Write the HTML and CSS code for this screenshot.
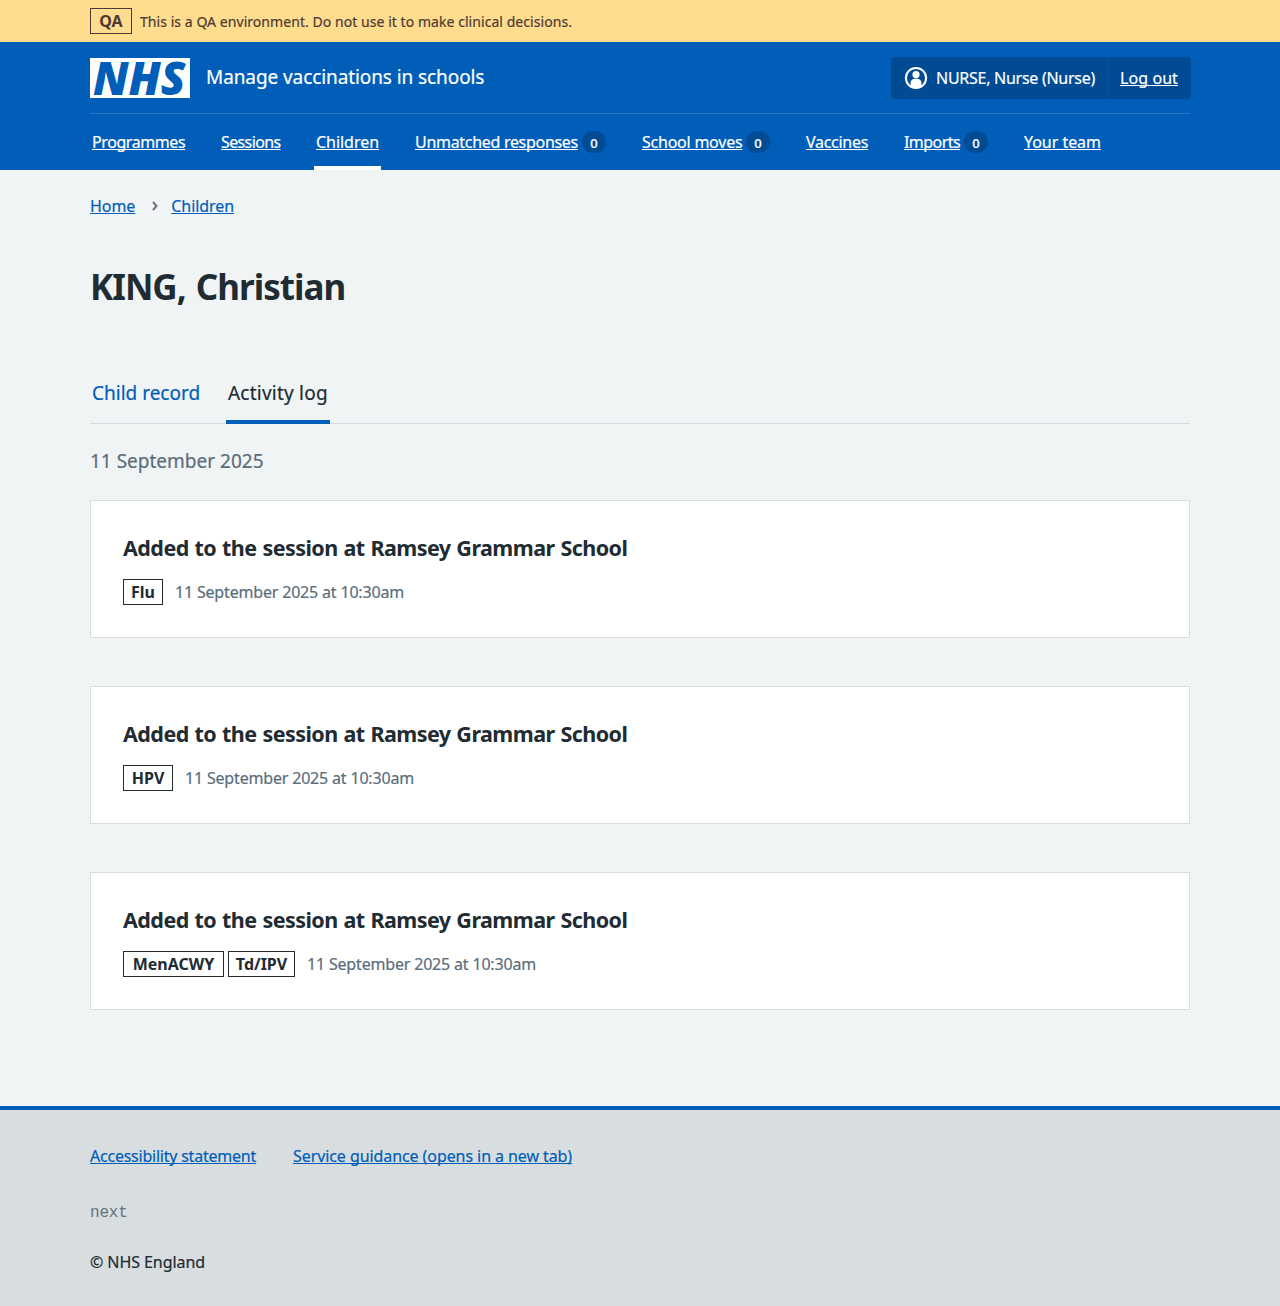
FILE: index.html
```html
<!DOCTYPE html>
<html lang="en">
<head>
<meta charset="utf-8">
<title>KING, Christian – Activity log</title>
<link rel="stylesheet" href="styles.css">
</head>
<body>
<div class="environment">
  <div class="container environment-inner">
    <strong class="tag tag-env">QA</strong>
    <span class="environment-text">This is a QA environment. Do not use it to make clinical decisions.</span>
  </div>
</div>
<header class="header">
  <div class="container">
    <div class="header-top">
      <svg class="logo" viewBox="0 0 100 40" width="100" height="40" role="img" aria-label="NHS">
        <rect width="100" height="40" fill="#fff"/>
        <text class="logo-text" x="3" y="36.5" textLength="92.500" lengthAdjust="spacingAndGlyphs">NHS</text>
      </svg>
      <span class="service-name">Manage vaccinations in schools</span>
      <div class="account">
        <div class="account-user">
          <svg class="account-icon" viewBox="0 0 24 24" width="24" height="24" aria-hidden="true">
            <circle cx="12" cy="12" r="10.1" fill="none" stroke="#fff" stroke-width="2"/>
            <circle cx="12" cy="8.6" r="3.6" fill="#fff"/>
            <path d="M6.500 20.500V17c0-2.500 1.800-4.200 4.200-4.200h2.600c2.400 0 4.200 1.700 4.200 4.200v3.500c-3.300 2.600-7.700 2.600-11 0z" fill="#fff"/>
          </svg>
          <span class="account-name">NURSE, Nurse (Nurse)</span>
        </div>
        <a class="account-link" href="#">Log out</a>
      </div>
    </div>
    <nav class="nav">
      <a class="nav-item programmes" href="#"><span>Programmes</span></a>
      <a class="nav-item sessions" href="#"><span>Sessions</span></a>
      <a class="nav-item children current" href="#"><span>Children</span></a>
      <a class="nav-item unmatched" href="#"><span>Unmatched responses</span><b class="count">0</b></a>
      <a class="nav-item moves" href="#"><span>School moves</span><b class="count">0</b></a>
      <a class="nav-item vaccines" href="#"><span>Vaccines</span></a>
      <a class="nav-item imports" href="#"><span>Imports</span><b class="count">0</b></a>
      <a class="nav-item team" href="#"><span>Your team</span></a>
    </nav>
  </div>
</header>
<div class="container page">
  <nav class="breadcrumb">
    <a href="#">Home</a>
    <svg class="chevron" viewBox="0 0 8 12" width="8" height="12" aria-hidden="true"><path d="M2 2l3.500 4L2 10" fill="none" stroke="#6b727a" stroke-width="2"/></svg>
    <a href="#">Children</a>
  </nav>
  <main>
    <h1 class="title">KING, Christian</h1>
    <nav class="tabs">
      <a class="tab tab-record" href="#"><span>Child record</span></a>
      <a class="tab tab-log selected" href="#"><span>Activity log</span></a>
    </nav>
    <h2 class="day">11 September 2025</h2>
    <section class="card">
      <h3 class="card-title">Added to the session at Ramsey Grammar School</h3>
      <p class="card-meta"><strong class="tag tag-flu">Flu</strong><span class="time">11 September 2025 at 10:30am</span></p>
    </section>
    <section class="card">
      <h3 class="card-title">Added to the session at Ramsey Grammar School</h3>
      <p class="card-meta"><strong class="tag tag-hpv">HPV</strong><span class="time">11 September 2025 at 10:30am</span></p>
    </section>
    <section class="card">
      <h3 class="card-title">Added to the session at Ramsey Grammar School</h3>
      <p class="card-meta"><strong class="tag tag-men">MenACWY</strong><strong class="tag tag-td">Td/IPV</strong><span class="time">11 September 2025 at 10:30am</span></p>
    </section>
  </main>
</div>
<footer class="footer">
  <div class="container">
    <div class="footer-links">
      <a class="footer-accessibility" href="#">Accessibility statement</a>
      <a class="footer-guidance" href="#">Service guidance (opens in a new tab)</a>
    </div>
    <p class="version">next</p>
    <p class="copyright">© NHS England</p>
  </div>
</footer>
</body>
</html>
```
FILE: styles.css
```css
* { box-sizing: border-box; }
body {
  margin: 0;
  background: #f0f4f5;
  color: #212b32;
  font: 400 16px/24px "Noto Sans", "Open Sans", sans-serif;
  -webkit-text-stroke-width: 0.2px;
  white-space: nowrap;
}
h1, h2, h3, p { margin: 0; }
strong, h1, h3, svg, .version { -webkit-text-stroke-width: 0; }
a { color: #005eb8; text-underline-offset: 1px; text-decoration-thickness: 1px; text-decoration-skip-ink: none; }
.container { width: 1100px; margin: 0 auto; }

.tag {
  display: flex;
  align-items: center;
  justify-content: center;
  height: 26px;
  border: 1px solid #212b32;
  font-weight: 700;
  line-height: 24px;
}

.environment { height: 42px; background: #ffdc8e; color: #4d3b33; }
.environment-inner { display: flex; align-items: center; gap: 8px; height: 42px; }
.tag-env { width: 42px; border-color: #4d3b33; }
.environment-text { padding-top: 2px; font-size: 14px; line-height: 24px; letter-spacing: 0.055px; }

.header { height: 128px; background: #005eb8; color: #fff; }
.header-top {
  display: flex;
  align-items: center;
  height: 72px;
  border-bottom: 1px solid #2674c2;
}
.logo { flex: none; display: block; overflow: visible; }
.logo-text { fill: #005eb8; font: italic 800 46.5px "Open Sans", sans-serif; }
.service-name { margin: -2px 0 0 16px; font-size: 19px; line-height: 28px; letter-spacing: -0.09px; }
.account {
  display: flex;
  width: 300px;
  height: 42px;
  margin: 0 -1px 0 auto;
  border-radius: 4px;
  background: #004b93;
}
.account-user {
  display: flex;
  align-items: center;
  width: 217px;
  padding-left: 13px;
  border-right: 1px solid #0057aa;
}
.account-icon { flex: none; margin-right: 8px; }
.account-name { letter-spacing: -0.27px; }
.account-link { padding: 9px 12px; color: #fff; letter-spacing: 0.08px; }

.nav { display: flex; gap: 32px; height: 56px; }
.nav-item {
  display: flex;
  align-items: center;
  gap: 4px;
  padding: 4px 2px 0;
  border-bottom: 4px solid transparent;
  color: #fff;
  text-decoration: none;
}
.nav-item span { text-decoration: underline; text-decoration-thickness: 1px; text-underline-offset: 1px; text-decoration-skip-ink: none; }
.current { border-bottom-color: #fff; }
.programmes span { width: 93px; letter-spacing: -0.42px; }
.sessions span { width: 59px; letter-spacing: -0.62px; }
.children span { width: 63px; letter-spacing: -0.04px; }
.unmatched span { width: 163px; letter-spacing: -0.3px; }
.moves span { width: 100px; letter-spacing: -0.23px; }
.vaccines span { width: 62px; letter-spacing: -0.28px; }
.imports span { width: 56px; letter-spacing: -0.56px; }
.team span { width: 77px; letter-spacing: -0.04px; }
.count {
  width: 24px;
  height: 22px;
  border-radius: 11px;
  background: #004b93;
  font-size: 13px;
  font-weight: 500;
  line-height: 24px;
  text-align: center;
}

.page { height: 936px; padding-top: 24px; }
.breadcrumb { display: flex; align-items: center; height: 24px; letter-spacing: -0.06px; }
.chevron { margin: 0 12px 0 16px; }
.title { margin-top: 40px; font-size: 35px; font-weight: 700; line-height: 58px; letter-spacing: -0.98px; word-spacing: 2px; }
.tabs {
  display: flex;
  gap: 24px;
  height: 59px;
  margin-top: 49px;
  border-bottom: 1px solid #d8dde0;
}
.tab {
  height: 59px;
  padding: 14px 2px 0;
  font-size: 19px;
  line-height: 28px;
  text-decoration: none;
}
.tab-record { width: 112px; }
.tab-log { width: 104px; letter-spacing: 0.22px; }
.selected { border-bottom: 4px solid #005eb8; color: #212b32; }
.day { margin: 23px 0 25px; font-size: 19px; font-weight: 400; line-height: 28px; color: #5c6c7a; }
.card {
  height: 138px;
  margin-top: 48px;
  padding: 31px 32px;
  border: 1px solid #d8dde0;
  background: #fff;
}
.day + .card { margin-top: 0; }
.card-title { font-size: 21.5px; font-weight: 700; line-height: 32px; letter-spacing: -0.55px; word-spacing: 0.8px; }
.card-meta { display: flex; gap: 4px; margin-top: 15px; }
.time { margin-left: 8px; line-height: 26px; letter-spacing: -0.18px; color: #5a6d7b; }
.tag-flu { width: 40px; }
.tag-hpv { width: 50px; }
.tag-men { width: 101px; }
.tag-td { width: 67px; }

.footer { height: 200px; padding-top: 34px; border-top: 4px solid #005eb8; background: #d8dde0; }
.footer-links { display: flex; gap: 37px; }
.footer-accessibility { width: 166px; letter-spacing: -0.23px; }
.footer-guidance { letter-spacing: -0.08px; }
.version { margin-top: 33px; font-family: "Liberation Mono", monospace; color: #66727c; letter-spacing: -0.2px; }
.copyright { margin-top: 25px; letter-spacing: -0.07px; }
```
